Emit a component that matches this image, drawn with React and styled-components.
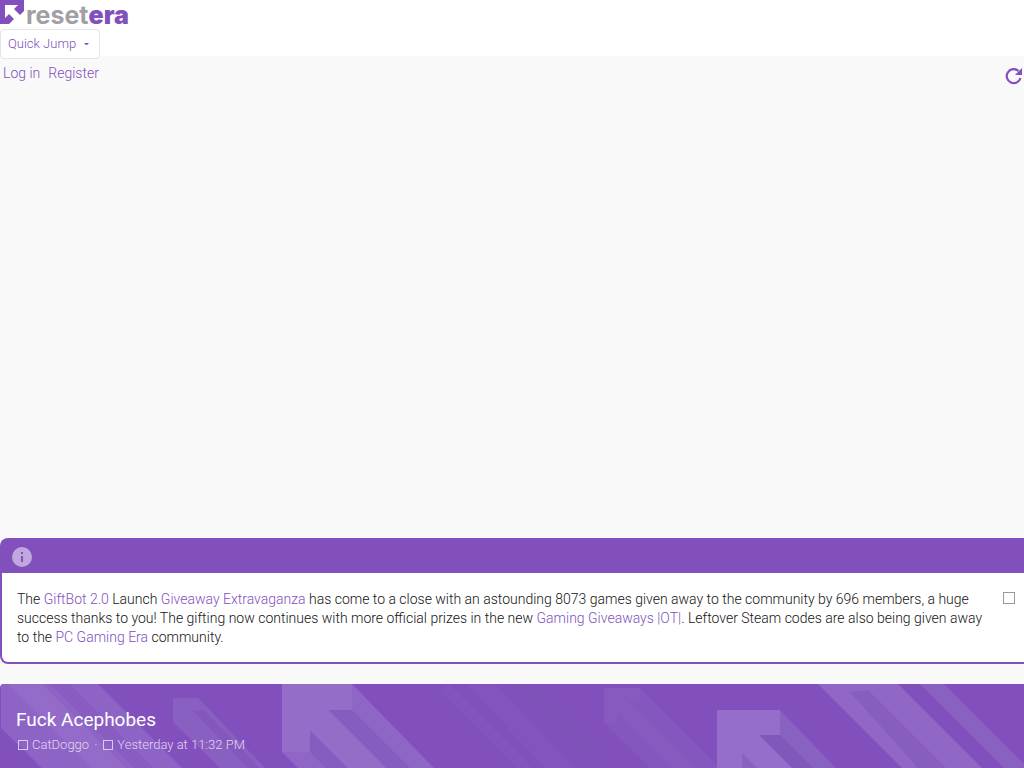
import React from 'react'
import styled, { createGlobalStyle } from 'styled-components'

const PURPLE = '#8150bd'

const GlobalStyle = createGlobalStyle`
  * {
    box-sizing: border-box;
  }
  body {
    margin: 0;
    overflow-x: hidden;
    background: #f9f9f9;
    color: #141414;
    font: 300 14px/19px Roboto, sans-serif;
  }
  a {
    color: ${PURPLE};
    text-decoration: none;
  }
`

const Header = styled.header`
  height: 56px;
  background: #fff;
`

const Logo = styled.a`
  display: flex;
  align-items: center;
  height: 29px;
`

const LogoText = styled.span`
  font: 700 25px/32px Inter, sans-serif;
  color: #a0a0a5;
  b {
    color: ${PURPLE};
  }
`

const QuickJump = styled.button`
  display: flex;
  align-items: center;
  gap: 8px;
  height: 30px;
  padding: 0 10px 0 7px;
  background: #fff;
  border: 1px solid #e6e3ea;
  border-radius: 4px;
  color: ${PURPLE};
  font: 300 13px/18px Roboto, sans-serif;
`

const Visitor = styled.nav`
  display: flex;
  align-items: flex-start;
  gap: 8px;
  height: 482px;
  padding: 8px 1px 0 3px;
`

const Refresh = styled.button`
  display: flex;
  margin-left: auto;
  padding: 3px 0 0;
  border: 0;
  background: none;
`

const Notice = styled.section`
  border: 2px solid ${PURPLE};
  border-right: 0;
  border-radius: 8px 0 0 8px;
  background: #fff;
`

const NoticeHead = styled.div`
  display: flex;
  align-items: center;
  height: 33px;
  padding-left: 10px;
  background: ${PURPLE};
`

const NoticeBody = styled.div`
  display: flex;
  justify-content: space-between;
  gap: 12px;
  padding: 17px 9px 15px 15px;
  p {
    margin: 0;
  }
`

const Dismiss = styled.button`
  flex: none;
  width: 12px;
  height: 12px;
  margin-top: 2px;
  padding: 0;
  border: 1px solid #999;
  background: #fff;
`

const Thread = styled.section`
  position: relative;
  min-height: 84px;
  margin-top: 20px;
  padding: 24px 16px 12px;
  overflow: hidden;
  border-radius: 4px 0 0 0;
  background: ${PURPLE};
  color: #fff;
`

const Arrows = styled.svg`
  position: absolute;
  top: 0;
  left: 0;
  width: 100%;
  height: 100%;
`

const ThreadText = styled.div`
  position: relative;
`

const Title = styled.h1`
  margin: 0;
  font-size: 19px;
  line-height: 24px;
  font-weight: 400;
`

const Meta = styled.div`
  display: flex;
  align-items: center;
  gap: 4px;
  margin-top: 4px;
  padding-left: 2px;
  font-size: 13px;
  line-height: 18px;
  color: #e2d6f1;
  a {
    color: inherit;
  }
`

const Dot = styled.span`
  padding: 0 2px 0 1px;
`

const Box = styled.span`
  width: 10px;
  height: 10px;
  border: 1px solid #d9cbec;
`

function Banner() {
  return (
    <Arrows viewBox="0 0 1024 84" preserveAspectRatio="xMinYMin slice" aria-hidden="true">
      <path fill="#8e63c6" d="M1 0H98L182 84H42L1 44Z" />
      <path fill="#956bca" d="M8 0H42L126 84H92Z" />
      <path fill="#885cc1" d="M50 0H70L154 84H134Z" />
      <path fill="#8960c1" d="M173 14H198L265 84H220L173 38Z" />
      <path fill="#8358bd" d="M192 26H204L260 84H248Z" />
      <path fill="#8f65c6" d="M352 0L434 84H298L282 68V0Z" />
      <path fill="#875cc0" d="M328 26H352L410 84H386ZM310 46V68L326 84H348Z" />
      <path fill="#956dc9" d="M282 0H352V26H328L386 84H348L310 46V68H282Z" />
      <path fill="#8354be" d="M440 7L448 0L532 84H517ZM467 0H495L575 84H545Z" />
      <path fill="#7f52ba" d="M512 0H532L608 76L600 84Z" />
      <path fill="#8457be" d="M604 4H640L720 84H650L604 39Z" />
      <path fill="#875abf" d="M604 4H640V17H628L695 84H673L617 28V39H604Z" />
      <path fill="#8961c1" d="M780 26L836 84H717V26Z" />
      <path fill="#8257bb" d="M759 51H780L813 84H792Z" />
      <path fill="#976dcb" d="M717 26H780V51H759L792 84H757L742 69V84H717Z" />
      <path fill="#9067c6" d="M818 0H898L982 84H902Z" />
      <path fill="#875dc0" d="M850 8L868 6L946 84H918Z" />
      <path fill="#8961c0" d="M920 0H944L1024 80V84H1004Z" />
    </Arrows>
  )
}

function App() {
  return (
    <>
      <GlobalStyle />
      <Header>
        <Logo href="#" aria-label="resetera">
          <svg width="26" height="29" viewBox="0 0 26 29">
            <path fill={PURPLE} d="M0 0H24V11L20 15L14 9L18 5H5V18L9 14L14 19L9 24H0Z" />
          </svg>
          <LogoText>
            reset<b>era</b>
          </LogoText>
        </Logo>
        <QuickJump type="button">
          Quick Jump
          <svg width="5" height="3" viewBox="0 0 5 3">
            <path fill={PURPLE} d="M0 0H5L3 2H2Z" />
          </svg>
        </QuickJump>
      </Header>
      <Visitor>
        <a href="#">Log in</a>
        <a href="#">Register</a>
        <Refresh type="button" aria-label="Refresh">
          <svg width="18" height="18" viewBox="0 0 18 18">
            <path
              fill="none"
              stroke={PURPLE}
              strokeWidth="2.2"
              d="M15.5 11A7 7 0 1 1 13.5 4"
            />
            <path fill={PURPLE} d="M17 1V8H10Z" />
          </svg>
        </Refresh>
      </Visitor>
      <Notice>
        <NoticeHead>
          <svg width="20" height="20" viewBox="0 0 20 20">
            <circle cx="10" cy="10" r="10" fill="#c0a8de" />
            <path fill={PURPLE} d="M9 5H11V7H9ZM9 9H11V15H9Z" />
          </svg>
        </NoticeHead>
        <NoticeBody>
          <p>
            The <a href="#">GiftBot 2.0</a> Launch <a href="#">Giveaway Extravaganza</a> has come to
            a close with an astounding 8073 games given away to the community by 696 members, a huge
            success thanks to you! The gifting now continues with more official prizes in the new{' '}
            <a href="#">Gaming Giveaways |OT|</a>. Leftover Steam codes are also being given away to
            the <a href="#">PC Gaming Era</a> community.
          </p>
          <Dismiss type="button" aria-label="Dismiss notice" />
        </NoticeBody>
      </Notice>
      <Thread>
        <Banner />
        <ThreadText>
          <Title>Fuck Acephobes</Title>
          <Meta>
            <Box />
            <a href="#">CatDoggo</a>
            <Dot>·</Dot>
            <Box />
            <a href="#">Yesterday at 11:32 PM</a>
          </Meta>
        </ThreadText>
      </Thread>
    </>
  )
}

export default App
